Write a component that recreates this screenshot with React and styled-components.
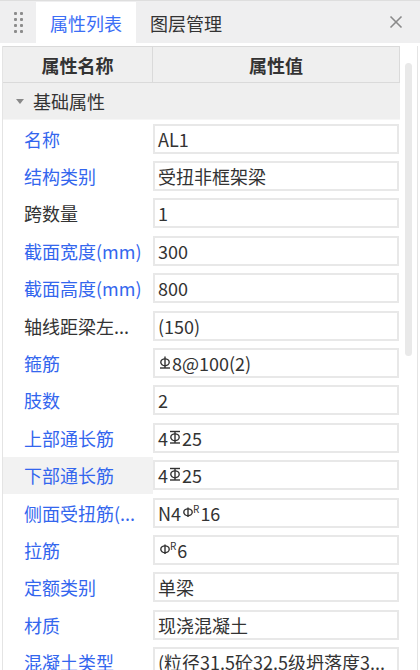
import React from 'react'
import styled, { createGlobalStyle } from 'styled-components'

const Global = createGlobalStyle`
  html, body {
    margin: 0;
    padding: 0;
    background: #fff;
  }
  body {
    font-family: "Noto Sans CJK SC", "Noto Sans", sans-serif;
    color: #333;
  }
`

const Panel = styled.div`
  width: 420px;
  height: 670px;
  overflow: hidden;
  display: flex;
  flex-direction: column;
  background: #fff;
`

const TabBar = styled.div`
  height: 42px;
  flex: none;
  display: flex;
  align-items: stretch;
  background: #efeff0;
  border-top: 1px solid #dedede;
`

const Grip = styled.div`
  width: 36px;
  display: grid;
  grid-template-columns: repeat(2, 3px);
  grid-auto-rows: 3px;
  gap: 3px 3px;
  align-content: center;
  justify-content: center;
  padding-top: 1px;
  span {
    background: #8c8c8c;
    border-radius: 1px;
  }
`

const Tab = styled.div`
  display: flex;
  align-items: center;
  padding: 0 14px;
  margin-top: 1px;
  font-size: 18px;
  color: ${p => (p.$active ? '#3b6ef6' : '#333')};
  background: ${p => (p.$active ? '#fff' : 'transparent')};
`

const Close = styled.div`
  margin-left: auto;
  width: 48px;
  display: flex;
  align-items: center;
  justify-content: center;
  color: #8a8a8a;
`

const Body = styled.div`
  flex: 1;
  display: flex;
  margin: 3px 2px 0 2px;
  border-left: 1px solid #e4e4e4;
  border-right: 1px solid #e4e4e4;
  min-height: 0;
`

const Table = styled.div`
  width: 397px;
  flex: none;
  display: flex;
  flex-direction: column;
`

const HeadRow = styled.div`
  height: 35px;
  flex: none;
  display: grid;
  grid-template-columns: 149px 1fr;
  background: #efefef;
  border: 1px solid #dadada;
  border-left: none;
`

const HeadCell = styled.div`
  display: flex;
  align-items: center;
  justify-content: center;
  font-size: 18px;
  font-weight: 700;
  color: #333;
  & + & {
    border-left: 1px solid #dadada;
  }
`

const Group = styled.div`
  height: 36px;
  flex: none;
  display: flex;
  align-items: center;
  gap: 9px;
  padding-left: 13px;
  background: #efefef;
  font-size: 18px;
  color: #333;
  border-bottom: 1px solid #f6f6f6;
`

const Caret = styled.span`
  width: 0;
  height: 0;
  border-left: 4px solid transparent;
  border-right: 4px solid transparent;
  border-top: 5px solid #888;
  margin-top: 1px;
`

const Row = styled.div`
  height: 37.4px;
  flex: none;
  display: grid;
  grid-template-columns: 150px 1fr;
  background: ${p => (p.$hover ? 'linear-gradient(to right, #f2f2f2 150px, transparent 150px)' : 'transparent')};
`

const Label = styled.div`
  display: flex;
  align-items: center;
  padding: 0 4px 0 21px;
  font-size: 18px;
  white-space: nowrap;
  overflow: hidden;
  color: ${p => (p.$plain ? '#333' : '#3366ee')};
  min-width: 0;
`

const ValueCell = styled.div`
  display: flex;
  align-items: center;
  padding-right: 1px;
  min-width: 0;
`

const ValueBox = styled.div`
  flex: 1;
  height: 30px;
  box-sizing: border-box;
  border: 2px solid #e8e8e8;
  display: flex;
  align-items: center;
  padding-left: 3px;
  font-size: 18px;
  color: #333;
  white-space: nowrap;
  overflow: hidden;
  min-width: 0;
`

const Scroll = styled.div`
  flex: 1;
  display: flex;
  justify-content: center;
  padding-top: 17px;
`

const Thumb = styled.div`
  width: 7px;
  height: 293px;
  border-radius: 4px;
  background: #e9e9e9;
`

const Sym = styled.span`
  display: inline-flex;
  align-items: flex-start;
  position: relative;
  top: -1px;
  margin: 0 1px;
  sup {
    font-size: 10px;
    line-height: 1;
    margin-left: -1px;
    margin-top: -1px;
  }
`

const Bar = ({ type }) => (
  <Sym>
    <svg width="12" height="14" viewBox="0 0 12 14" fill="none" stroke="#333" strokeWidth="1.4">
      <ellipse cx="6" cy="7.3" rx="4.2" ry="3.4" />
      <line x1="6" y1={type === 'a' ? 2.5 : 1.5} x2="6" y2={type === 'a' ? 12 : 13} />
      {type === 'c' && <line x1="1" y1="1.5" x2="11" y2="1.5" />}
      {type !== 'a' && <line x1="1" y1="13" x2="11" y2="13" />}
    </svg>
    {type === 'a' && <sup>R</sup>}
  </Sym>
)

const rows = [
  { label: '名称', value: ['AL1'] },
  { label: '结构类别', value: ['受扭非框架梁'] },
  { label: '跨数量', plain: true, value: ['1'] },
  { label: '截面宽度(mm)', value: ['300'] },
  { label: '截面高度(mm)', value: ['800'] },
  { label: '轴线距梁左...', plain: true, value: ['(150)'] },
  { label: '箍筋', value: [{ s: 'b' }, '8@100(2)'] },
  { label: '肢数', value: ['2'] },
  { label: '上部通长筋', value: ['4', { s: 'c' }, '25'] },
  { label: '下部通长筋', hover: true, value: ['4', { s: 'c' }, '25'] },
  { label: '侧面受扭筋(...', value: ['N4', { s: 'a' }, '16'] },
  { label: '拉筋', value: [{ s: 'a' }, '6'] },
  { label: '定额类别', value: ['单梁'] },
  { label: '材质', value: ['现浇混凝土'] },
  { label: '混凝土类型', value: ['(粒径31.5砼32.5级坍落度3...'] },
]

const Value = ({ parts }) => (
  <ValueBox>
    {parts.map((p, i) =>
      typeof p === 'string' ? <span key={i}>{p}</span> : <Bar key={i} type={p.s} />
    )}
  </ValueBox>
)

export default function App() {
  return (
    <Panel>
      <Global />
      <TabBar>
        <Grip>
          {Array.from({ length: 8 }).map((_, i) => <span key={i} />)}
        </Grip>
        <Tab $active>属性列表</Tab>
        <Tab>图层管理</Tab>
        <Close>
          <svg width="14" height="14" viewBox="0 0 14 14" stroke="currentColor" strokeWidth="1.6">
            <line x1="1.5" y1="1.5" x2="12.5" y2="12.5" />
            <line x1="12.5" y1="1.5" x2="1.5" y2="12.5" />
          </svg>
        </Close>
      </TabBar>
      <Body>
        <Table>
          <HeadRow>
            <HeadCell>属性名称</HeadCell>
            <HeadCell>属性值</HeadCell>
          </HeadRow>
          <Group>
            <Caret />
            基础属性
          </Group>
          {rows.map(r => (
            <Row key={r.label} $hover={r.hover}>
              <Label $plain={r.plain}>{r.label}</Label>
              <ValueCell><Value parts={r.value} /></ValueCell>
            </Row>
          ))}
        </Table>
        <Scroll>
          <Thumb />
        </Scroll>
      </Body>
    </Panel>
  )
}
